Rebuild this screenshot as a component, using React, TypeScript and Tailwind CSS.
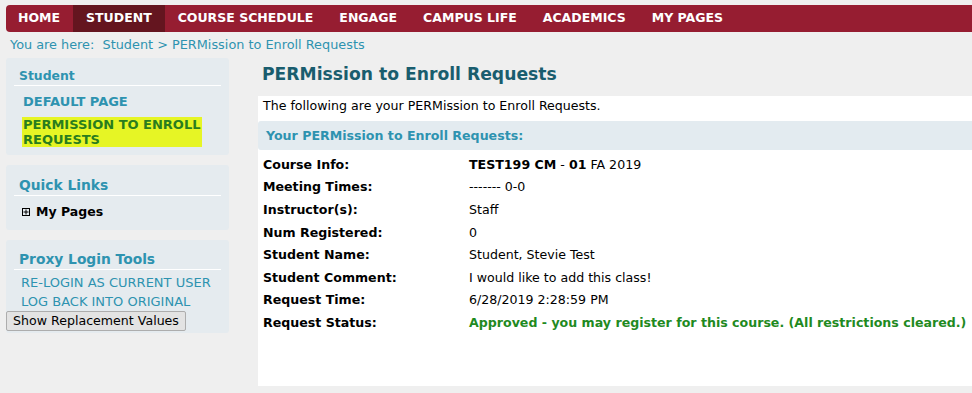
import React from "react";

const navItems = ["HOME", "STUDENT", "COURSE SCHEDULE", "ENGAGE", "CAMPUS LIFE", "ACADEMICS", "MY PAGES"];

const rows: { label: string; value: React.ReactNode }[] = [
  {
    label: "Course Info:",
    value: (
      <>
        <b>TEST199 CM</b> - <b>01</b> FA 2019
      </>
    ),
  },
  { label: "Meeting Times:", value: "------- 0-0" },
  { label: "Instructor(s):", value: "Staff" },
  { label: "Num Registered:", value: "0" },
  { label: "Student Name:", value: "Student, Stevie Test" },
  { label: "Student Comment:", value: "I would like to add this class!" },
  { label: "Request Time:", value: "6/28/2019 2:28:59 PM" },
  {
    label: "Request Status:",
    value: (
      <span className="font-bold text-[#1f8a1f]">
        Approved - you may register for this course. (All restrictions cleared.)
      </span>
    ),
  },
];

export default function App() {
  return (
    <div
      className="w-[972px] h-[393px] overflow-hidden bg-[#efefef] text-[13px] text-black"
      style={{ fontFamily: '"DejaVu Sans", Verdana, sans-serif' }}
    >
      {/* Nav */}
      <div className="pt-[5px] pl-[6px]">
        <div className="flex h-[27px] items-stretch rounded-l-[4px] bg-[#961d31]">
          {navItems.map((n, i) => (
            <div
              key={n}
              className={`flex items-center pr-[13px] text-[12.5px] font-bold text-white ${
                i === 0 ? "pl-[12px]" : "pl-[13px]"
              } ${n === "STUDENT" ? "bg-[#64151f]" : ""}`}
            >
              {n}
            </div>
          ))}
        </div>
      </div>

      {/* Breadcrumb */}
      <div className="flex h-[24px] items-center pl-[10px] pt-[1px] text-[12.85px] text-[#2e93b0]">
        You are here:&nbsp; Student &gt; PERMission to Enroll Requests
      </div>

      <div className="flex">
        {/* Sidebar */}
        <div className="ml-[6px] mt-[2px] flex w-[223px] shrink-0 flex-col gap-[10px]">
          <div className="h-[97px] rounded-[3px] bg-[#e5ebef] px-[8px] pt-[9px]">
            <div className="flex h-[18px] items-center pl-[5px] text-[12.4px] font-bold text-[#2e93b0]">Student</div>
            <div className="h-[1px] bg-white" />
            <div className="flex h-[25px] items-end pl-[9px] font-bold text-[#2e93b0]">DEFAULT PAGE</div>
            <div className="mt-[6px] pl-[8px]">
              <div className="inline-block bg-[#e6f525] pl-[1px] pr-[2px] font-bold leading-[15px] text-[#2a7d1e]">
                PERMISSION TO ENROLL
                <br />
                REQUESTS
              </div>
            </div>
          </div>

          <div className="h-[65px] rounded-[3px] bg-[#e5ebef] px-[8px] pt-[10px]">
            <div className="flex h-[20px] items-center pl-[5px] text-[13.8px] font-bold text-[#2e93b0]">Quick Links</div>
            <div className="h-[1px] bg-white" />
            <div className="mt-[7px] flex items-center pl-[8px] text-[12.5px] font-bold">
              <span className="mr-[6px] flex h-[8px] w-[8px] items-center justify-center border border-black">
                <svg width="6" height="6" viewBox="0 0 6 6">
                  <path d="M3 0.5V5.5M0.5 3H5.5" stroke="black" strokeWidth="1" />
                </svg>
              </span>
              My Pages
            </div>
          </div>

          <div className="h-[93px] rounded-[3px] bg-[#e5ebef] pt-[9px]">
            <div className="px-[8px]">
              <div className="flex h-[20px] items-center pl-[5px] text-[13.8px] font-bold text-[#2e93b0]">Proxy Login Tools</div>
              <div className="h-[1px] bg-white" />
            </div>
            <div className="mt-[3px] flex h-[19px] items-center pl-[15px] text-[#2e93b0]">RE-LOGIN AS CURRENT USER</div>
            <div className="flex h-[19px] items-center pl-[15px] text-[#2e93b0]">LOG BACK INTO ORIGINAL</div>
            <button className="h-[20px] w-[180px] rounded-[2px] border border-[#adadad] bg-[#e3e3e3] text-[12.6px] leading-none text-black">
              Show Replacement Values
            </button>
          </div>
        </div>

        {/* Main */}
        <div className="ml-[29px] min-w-0 flex-1">
          <div className="mb-[4px] flex h-[36px] items-center pl-[4px] pt-[2px] text-[17.2px] font-bold text-[#195d6e]">
            PERMission to Enroll Requests
          </div>
          <div className="h-[290px] bg-white text-[12.6px]">
            <div className="h-[25px] pl-[5px] pt-[2px] leading-[16px]">
              The following are your PERMission to Enroll Requests.
            </div>
            <div className="flex h-[29px] items-center rounded-l-[3px] bg-[#e3ebf0] pl-[8px] pt-[2px] font-bold text-[#2e93b0]">
              Your PERMission to Enroll Requests:
            </div>
            <div className="pt-[4px] pl-[5px]">
              {rows.map((r) => (
                <div key={r.label} className="flex h-[22.6px] items-center">
                  <div className="w-[206px] shrink-0 font-bold">{r.label}</div>
                  <div className="whitespace-nowrap">{r.value}</div>
                </div>
              ))}
            </div>
          </div>
        </div>
      </div>
    </div>
  );
}
